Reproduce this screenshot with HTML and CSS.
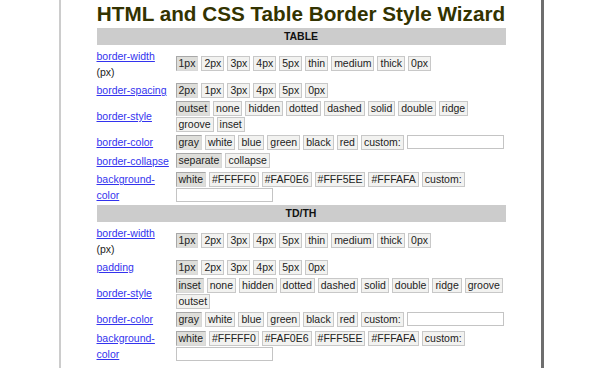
FILE: index.html
```html
<!DOCTYPE html>
<html>
<head>
<meta charset="utf-8">
<link rel="stylesheet" href="styles.css">
</head>
<body>
<div class="page">
  <h1 class="title">HTML and CSS Table Border Style Wizard</h1>
  <table class="wizard">
    <tr><th colspan="2" class="section">TABLE</th></tr>
    <tr>
      <td class="label"><a href="#">border-width</a><br>(px)</td>
      <td class="opts"><div class="set"><span class="btn sel">1px</span><span class="btn">2px</span><span class="btn">3px</span><span class="btn">4px</span><span class="btn">5px</span><span class="btn">thin</span><span class="btn">medium</span><span class="btn">thick</span><span class="btn">0px</span></div></td>
    </tr>
    <tr>
      <td class="label"><a href="#">border-spacing</a></td>
      <td class="opts"><div class="set"><span class="btn sel">2px</span><span class="btn">1px</span><span class="btn">3px</span><span class="btn">4px</span><span class="btn">5px</span><span class="btn">0px</span></div></td>
    </tr>
    <tr>
      <td class="label"><a href="#">border-style</a></td>
      <td class="opts"><div class="set"><span class="btn sel">outset</span><span class="btn">none</span><span class="btn">hidden</span><span class="btn">dotted</span><span class="btn">dashed</span><span class="btn">solid</span><span class="btn">double</span><span class="btn">ridge</span><span class="btn">groove</span><span class="btn">inset</span></div></td>
    </tr>
    <tr>
      <td class="label"><a href="#">border-color</a></td>
      <td class="opts"><div class="set"><span class="btn sel">gray</span><span class="btn">white</span><span class="btn">blue</span><span class="btn">green</span><span class="btn">black</span><span class="btn">red</span><span class="btn">custom:</span><input class="field" type="text"></div></td>
    </tr>
    <tr>
      <td class="label"><a href="#">border-collapse</a></td>
      <td class="opts"><div class="set"><span class="btn sel">separate</span><span class="btn">collapse</span></div></td>
    </tr>
    <tr>
      <td class="label"><a href="#">background-color</a></td>
      <td class="opts"><div class="set"><span class="btn sel">white</span><span class="btn">#FFFFF0</span><span class="btn">#FAF0E6</span><span class="btn">#FFF5EE</span><span class="btn">#FFFAFA</span><span class="btn">custom:</span><input class="field" type="text"></div></td>
    </tr>
    <tr><th colspan="2" class="section">TD/TH</th></tr>
    <tr>
      <td class="label"><a href="#">border-width</a><br>(px)</td>
      <td class="opts"><div class="set"><span class="btn sel">1px</span><span class="btn">2px</span><span class="btn">3px</span><span class="btn">4px</span><span class="btn">5px</span><span class="btn">thin</span><span class="btn">medium</span><span class="btn">thick</span><span class="btn">0px</span></div></td>
    </tr>
    <tr>
      <td class="label"><a href="#">padding</a></td>
      <td class="opts"><div class="set"><span class="btn sel">1px</span><span class="btn">2px</span><span class="btn">3px</span><span class="btn">4px</span><span class="btn">5px</span><span class="btn">0px</span></div></td>
    </tr>
    <tr>
      <td class="label"><a href="#">border-style</a></td>
      <td class="opts"><div class="set"><span class="btn sel">inset</span><span class="btn">none</span><span class="btn">hidden</span><span class="btn">dotted</span><span class="btn">dashed</span><span class="btn">solid</span><span class="btn">double</span><span class="btn">ridge</span><span class="btn">groove</span><span class="btn">outset</span></div></td>
    </tr>
    <tr>
      <td class="label"><a href="#">border-color</a></td>
      <td class="opts"><div class="set"><span class="btn sel">gray</span><span class="btn">white</span><span class="btn">blue</span><span class="btn">green</span><span class="btn">black</span><span class="btn">red</span><span class="btn">custom:</span><input class="field" type="text"></div></td>
    </tr>
    <tr>
      <td class="label"><a href="#">background-color</a></td>
      <td class="opts"><div class="set"><span class="btn sel">white</span><span class="btn">#FFFFF0</span><span class="btn">#FAF0E6</span><span class="btn">#FFF5EE</span><span class="btn">#FFFAFA</span><span class="btn">custom:</span><input class="field" type="text"></div></td>
    </tr>
  </table>
</div>
</body>
</html>
```

FILE: styles.css
```css
html, body {
  margin: 0;
  padding: 0;
  background: #ffffff;
}
body {
  font-family: "Liberation Sans", Arial, sans-serif;
  font-size: 10.5px;
  color: #222222;
}
.page {
  box-sizing: border-box;
  width: 485px;
  height: 368px;
  overflow: hidden;
  margin-left: 59px;
  border-left: 2px solid #cccccc;
  border-right: 3px solid #6e6e6e;
  background: #ffffff;
}
.title {
  margin: 0;
  padding-top: 1px;
  height: 25px;
  line-height: 26px;
  font-size: 20.7px;
  font-weight: bold;
  text-align: center;
  color: #333300;
}
.wizard {
  width: 409px;
  margin: 0 auto;
  border-collapse: separate;
  border-spacing: 0 2px;
}
.section {
  height: 17px;
  padding: 0;
  background: #cccccc;
  font-size: 10.5px;
  font-weight: bold;
  color: #111111;
  text-align: center;
  line-height: 17px;
}
.label {
  width: 75px;
  padding: 0.5px 4px 0 0;
  line-height: 16px;
  vertical-align: middle;
}
.label a {
  color: #3333ee;
  text-decoration: underline;
}
.opts {
  padding: 0.5px 0 0 0;
  vertical-align: middle;
}
.set {
  display: flex;
  flex-wrap: wrap;
  align-items: center;
  column-gap: 3px;
  row-gap: 1px;
}
.btn {
  box-sizing: border-box;
  height: 15px;
  line-height: 13px;
  padding: 0 2px;
  border: 1px solid #c8c8c8;
  background: #f2f2f0;
  color: #222222;
  white-space: nowrap;
}
.btn.sel {
  background: #dededa;
  border-color: #a8a8a8 #d8d8d8 #d8d8d8 #a8a8a8;
}
.field {
  box-sizing: border-box;
  width: 97px;
  height: 14px;
  margin: 0;
  padding: 0 2px;
  border: 1px solid #c4c4c4;
  background: #ffffff;
  font-family: inherit;
  font-size: 10.5px;
}
```
